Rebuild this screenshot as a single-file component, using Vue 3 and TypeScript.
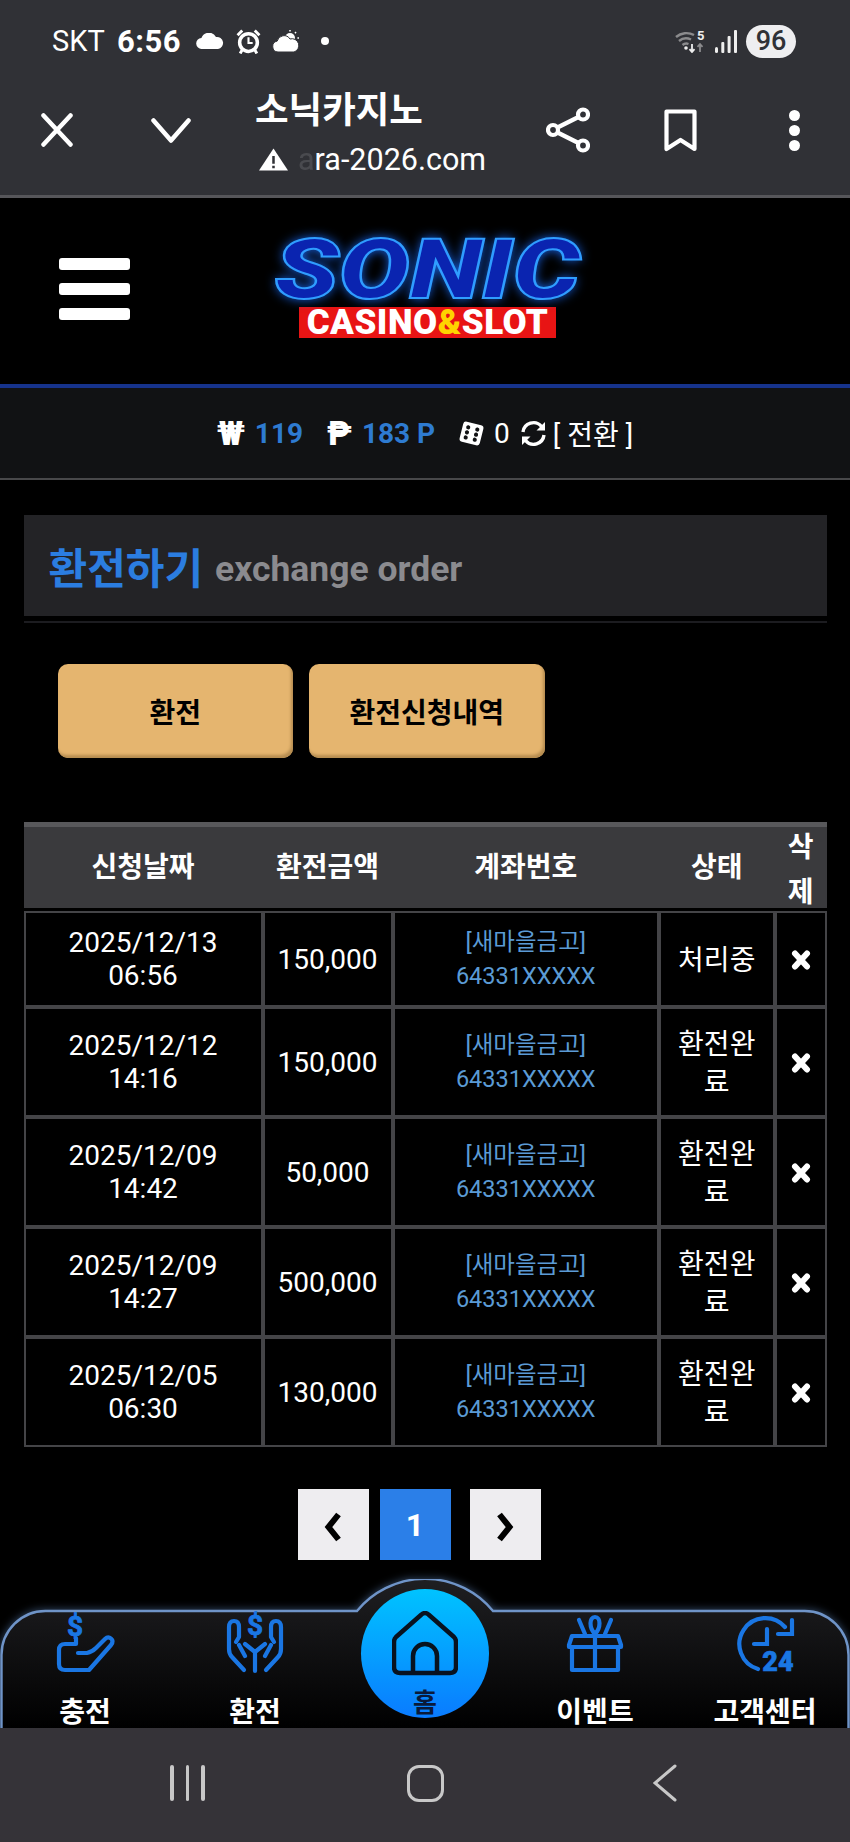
<script setup lang="ts">
interface ExchangeRow {
  date: string
  time: string
  amount: string
  status: string
}

const bank = '[새마을금고]'
const account = '64331XXXXX'

const rows: ExchangeRow[] = [
  { date: '2025/12/13', time: '06:56', amount: '150,000', status: '처리중' },
  { date: '2025/12/12', time: '14:16', amount: '150,000', status: '환전완료' },
  { date: '2025/12/09', time: '14:42', amount: '50,000', status: '환전완료' },
  { date: '2025/12/09', time: '14:27', amount: '500,000', status: '환전완료' },
  { date: '2025/12/05', time: '06:30', amount: '130,000', status: '환전완료' },
]
</script>

<template>
  <div class="phone">
    <div class="chrome">
      <div class="status-bar">
        <span class="carrier">SKT</span>
        <span class="clock">6:56</span>
        <svg class="st-cloud" viewBox="0 0 28 16"><path d="M6 16a5.500 5.500 0 0 1-.6-11A8 8 0 0 1 20 4a6 6 0 0 1 2 12z" fill="#fff" /></svg>
        <svg class="st-alarm" viewBox="0 0 24 24" fill="none" stroke="#fff">
          <circle cx="12" cy="13" r="8.500" stroke-width="3.400" />
          <path d="M12 8v5.500h4" stroke-width="2" />
          <path d="M1.500 6 6 1.500M22.500 6 18 1.500M6 20l-2 3.500M18 20l2 3.500" stroke-width="2.800" />
        </svg>
        <svg class="st-sun" viewBox="0 0 28 22">
          <circle cx="18" cy="8" r="5" fill="#fff" />
          <path d="M18 0v1.500M24 2l-1 1.200M27 8h-1.600" stroke="#fff" stroke-width="1.500" />
          <path d="M6 22a5.500 5.500 0 0 1-.8-10.900A7 7 0 0 1 18 9a6.500 6.500 0 0 1 4 13z" fill="#fff" stroke="#303136" stroke-width="1" />
        </svg>
        <span class="st-dot"></span>
        <span class="st-spacer"></span>
        <svg class="st-wifi" viewBox="0 0 30 24" fill="none">
          <path d="M1 8a16 16 0 0 1 18-2M4 12a11 11 0 0 1 12-1.500M7.500 16a6 6 0 0 1 6-1" stroke="#8b8b8d" stroke-width="2.400" />
          <circle cx="11" cy="19" r="1.800" fill="#eee" />
          <text x="22" y="11" class="st-five">5</text>
          <path d="M17 15v8m-2.500-2.800 2.500 2.800 2.500-2.800" stroke="#eee" stroke-width="1.800" />
          <path d="M25 23v-8m-2.500 2.800 2.500-2.800 2.500 2.800" stroke="#8b8b8d" stroke-width="1.800" />
        </svg>
        <svg class="st-signal" viewBox="0 0 22 23" fill="#eee">
          <rect x="0" y="17" width="3" height="6" rx="1.500" />
          <rect x="6.300" y="12" width="3" height="11" rx="1" />
          <rect x="12.600" y="6" width="3" height="17" rx="1" />
          <rect x="19" y="0" width="3" height="23" rx="1" />
        </svg>
        <span class="battery">96</span>
      </div>
      <div class="toolbar">
        <svg class="tb-close" viewBox="0 0 32 34" fill="none" stroke="#fff" stroke-width="4.500" stroke-linecap="round"><path d="M2.500 2.500 29.500 31.500M29.500 2.500 2.500 31.500" /></svg>
        <svg class="tb-chevron" viewBox="0 0 40 25" fill="none" stroke="#fff" stroke-width="4.500" stroke-linecap="round" stroke-linejoin="round"><path d="M2.500 2.500 20 22.500 37.500 2.500" /></svg>
        <div class="tb-title">
          <div class="tb-name">소닉카지노</div>
          <div class="tb-url">
            <svg class="tb-warn" viewBox="0 0 30 23"><path d="M15 0 30 23H0z" fill="#fff" /><path d="M15 8v8M15 18v2.500" stroke="#303136" stroke-width="2.600" /></svg>
            <span class="tb-url-text"><span class="tb-fade">a</span>ra-2026.com</span>
          </div>
        </div>
        <svg class="tb-share" viewBox="0 0 44 46" fill="none" stroke="#fff" stroke-width="4.200">
          <circle cx="37" cy="7.500" r="5" />
          <circle cx="7" cy="23" r="5" />
          <circle cx="37" cy="38.500" r="5" />
          <path d="M32.500 10 11.500 20.500M11.500 25.500 32.500 36" />
        </svg>
        <svg class="tb-mark" viewBox="0 0 33 43" fill="none" stroke="#fff" stroke-width="4.200" stroke-linejoin="round"><path d="M2.500 2.500h28v37.500L16.500 31 2.500 40z" /></svg>
        <div class="tb-dots"><span></span><span></span><span></span></div>
      </div>
    </div>

    <header class="site-header">
      <div class="burger"><span></span><span></span><span></span></div>
      <div class="logo">
        <div class="logo-sonic">SONIC</div>
        <div class="logo-sub">CASINO<em>&amp;</em>SLOT</div>
      </div>
    </header>

    <div class="balance">
      <span class="cur">₩</span>
      <span class="amt amt-first">119</span>
      <span class="cur cur-point">₱</span>
      <span class="amt amt-point">183 P</span>
      <svg class="dice" viewBox="0 0 26 26">
        <rect x="3" y="3" width="20" height="20" rx="3" fill="#fff" transform="rotate(14 13 13)" />
        <g fill="#111214" transform="rotate(14 13 13)">
          <circle cx="8.500" cy="8" r="2" /><circle cx="8.500" cy="13" r="2" /><circle cx="8.500" cy="18" r="2" />
          <circle cx="17.500" cy="8" r="2" /><circle cx="17.500" cy="13" r="2" /><circle cx="17.500" cy="18" r="2" />
        </g>
      </svg>
      <span class="zero">0</span>
      <svg class="refresh" viewBox="0 0 27 27" fill="none" stroke="#fff" stroke-width="3.400">
        <path d="M3 12A10.500 10.500 0 0 1 21.500 6.500" />
        <path d="M24 15A10.500 10.500 0 0 1 5.500 20.500" />
        <path d="M25 2v8.500h-8.500z" fill="#fff" stroke="none" />
        <path d="M2 25v-8.500h8.500z" fill="#fff" stroke="none" />
      </svg>
      <span class="switch">[ 전환 ]</span>
    </div>

    <main class="content">
      <div class="title-box">
        <h1>환전하기</h1>
        <span class="title-sub">exchange order</span>
      </div>
      <div class="title-rule"></div>

      <div class="tabs">
        <button type="button" class="tab">환전</button>
        <button type="button" class="tab">환전신청내역</button>
      </div>

      <table class="orders">
        <colgroup>
          <col style="width: 239px" />
          <col style="width: 130px" />
          <col style="width: 266.5px" />
          <col style="width: 115.5px" />
          <col style="width: 52.5px" />
        </colgroup>
        <thead>
          <tr>
            <th>신청날짜</th>
            <th>환전금액</th>
            <th>계좌번호</th>
            <th>상태</th>
            <th class="th-del"><span>삭제</span></th>
          </tr>
        </thead>
        <tbody>
          <tr v-for="row in rows" :key="row.date + row.time">
            <td>{{ row.date }}<br />{{ row.time }}</td>
            <td>{{ row.amount }}</td>
            <td class="td-account">{{ bank }}<br />{{ account }}</td>
            <td class="td-status">{{ row.status }}</td>
            <td class="td-del">
              <svg viewBox="0 0 20 20" fill="none" stroke="#fff" stroke-width="6" stroke-linecap="round"><path d="M4 3.500 16 16.500M16 3.500 4 16.500" /></svg>
            </td>
          </tr>
        </tbody>
      </table>

      <div class="pager">
        <a class="page-btn">
          <svg viewBox="0 0 20 30" fill="none" stroke="#000" stroke-width="6" stroke-linejoin="miter"><path d="M15.500 2.500 5.500 15l10 12.500" /></svg>
        </a>
        <a class="page-btn page-on">1</a>
        <a class="page-btn page-next">
          <svg viewBox="0 0 20 30" fill="none" stroke="#000" stroke-width="6" stroke-linejoin="miter"><path d="m4.500 2.500 10 12.500-10 12.500" /></svg>
        </a>
      </div>
    </main>

    <nav class="bottom-nav">
      <svg class="nav-shape" viewBox="0 0 850 149">
        <defs>
          <linearGradient id="navFill" x1="0" y1="0" x2="0" y2="1">
            <stop offset="0" stop-color="#1f1f22" />
            <stop offset="1" stop-color="#000" />
          </linearGradient>
        </defs>
        <path d="M1.500 150V76A44 44 0 0 1 45.500 32H357A88 88 0 0 1 493 32H804.500A44 44 0 0 1 848.500 76V150" fill="url(#navFill)" stroke="#6f94c8" stroke-width="2.400" />
      </svg>

      <a class="nav-item">
        <svg viewBox="0 0 56 57" fill="none" stroke="#1a76e3" stroke-width="4.200" stroke-linecap="round" stroke-linejoin="round">
          <text x="18" y="21" class="ico-dollar" text-anchor="middle">$</text>
          <path d="M19 23v6H8q-6 0-6 6v14q0 6 6 6h24l22-25q3-4 0-6.500t-6 0.500l-9 9q-4 4-9 5h-9" />
        </svg>
        <span>충전</span>
      </a>
      <a class="nav-item">
        <svg viewBox="0 0 56 57" fill="none" stroke="#1a76e3" stroke-width="4.200" stroke-linecap="round" stroke-linejoin="round">
          <text x="28" y="20" class="ico-dollar" text-anchor="middle">$</text>
          <path d="M17 55 5 42q-3-3-3-8V12q0-6 5-6t5 6v10l-3 5" />
          <path d="M39 55l12-13q3-3 3-8V12q0-6-5-6t-5 6v10l3 5" />
          <path d="M28 56V37l-10-8M28 37l10-8M12 30l6 11M44 30l-6 11" />
        </svg>
        <span>환전</span>
      </a>
      <div class="nav-home">
        <svg viewBox="0 0 66 65" fill="none" stroke="#08121f" stroke-width="4.500" stroke-linejoin="round">
          <path d="M29.500 3.500a5 5 0 0 1 7 0L62 26q2 2 2 5v25q0 6-6 6H8q-6 0-6-6V31q0-3 2-5z" />
          <path d="M21 61V45a12 12 0 0 1 24 0v16" />
        </svg>
        <span>홈</span>
      </div>
      <a class="nav-item">
        <svg viewBox="0 0 56 57" fill="none" stroke="#1a76e3" stroke-width="4.200" stroke-linecap="round" stroke-linejoin="round">
          <path d="M5 21h46l3 9v2H2v-2zM5 32v23h46V32M28 21v34" />
          <path d="M28 19c-6-6-6-17 0-17s6 11 0 17zM12 5l6 14M44 5l-6 14" />
        </svg>
        <span>이벤트</span>
      </a>
      <a class="nav-item">
        <svg viewBox="0 0 56 57" fill="none" stroke="#1a76e3" stroke-width="4.200" stroke-linecap="round">
          <path d="M21 54A26 26 0 1 1 48 12" />
          <path d="M41 19h14V5M30 14v15H17" />
          <text x="41" y="56" class="ico-24" text-anchor="middle">24</text>
        </svg>
        <span>고객센터</span>
      </a>
    </nav>

    <div class="system-nav">
      <div class="sys-recent"><span></span><span></span><span></span></div>
      <span class="sys-home"></span>
      <svg class="sys-back" viewBox="0 0 24 38" fill="none" stroke="#c8c8c8" stroke-width="3" stroke-linecap="round"><path d="M22 2 2 19l20 17" /></svg>
    </div>
  </div>
</template>

<style>
html,
body {
  background: #000;
}
</style>

<style scoped>
.phone {
  display: flex;
  flex-direction: column;
  width: 850px;
  height: 1842px;
  overflow: hidden;
  background: #000;
  color: #fff;
  font-family: Roboto, "Noto Sans CJK KR", sans-serif;
}

.chrome {
  height: 195px;
  background: #303136;
  border-bottom: 3px solid #56565a;
  flex-shrink: 0;
}

.status-bar {
  display: flex;
  align-items: center;
  height: 82px;
  padding: 0 54px 0 52px;
}

.carrier {
  font-size: 29px;
  width: 65px;
}

.clock {
  font-size: 31px;
  font-weight: 700;
  letter-spacing: 0.5px;
  width: 79px;
}

.st-cloud {
  width: 28px;
  height: 16px;
}

.st-alarm {
  width: 25px;
  height: 25px;
  margin-left: 12px;
}

.st-sun {
  width: 28px;
  height: 22px;
  margin-left: 11px;
}

.st-dot {
  width: 8px;
  height: 8px;
  border-radius: 50%;
  background: #fff;
  margin-left: 21px;
}

.st-spacer {
  flex: 1;
}

.st-wifi {
  width: 30px;
  height: 24px;
}

.st-five {
  font-size: 13px;
  font-weight: 700;
  fill: #eee;
  stroke: none;
}

.st-signal {
  width: 22px;
  height: 23px;
  margin-left: 10px;
}

.battery {
  width: 50px;
  height: 33px;
  margin-left: 9px;
  border-radius: 17px;
  background: #eeeef0;
  color: #303136;
  font-size: 27px;
  font-weight: 500;
  line-height: 33px;
  text-align: center;
}

.toolbar {
  display: flex;
  align-items: center;
  height: 96px;
  padding-left: 41px;
}

.tb-close {
  width: 32px;
  height: 34px;
}

.tb-chevron {
  width: 40px;
  height: 25px;
  margin-left: 78px;
}

.tb-title {
  width: 290px;
  margin-left: 64px;
  margin-top: 4px;
}

.tb-name {
  font-size: 36.5px;
  font-weight: 700;
  line-height: 48px;
}

.tb-url {
  display: flex;
  align-items: center;
  margin-top: 7px;
  margin-left: 4px;
}

.tb-warn {
  width: 29px;
  height: 23px;
}

.tb-url-text {
  font-size: 30.5px;
  line-height: 36px;
  margin-left: 10px;
}

.tb-fade {
  opacity: 0.12;
}

.tb-share {
  width: 44px;
  height: 46px;
  margin-left: 1px;
}

.tb-mark {
  width: 33px;
  height: 43px;
  margin-left: 74px;
}

.tb-dots {
  display: flex;
  flex-direction: column;
  gap: 4px;
  margin-left: 92px;
}

.tb-dots span {
  width: 11px;
  height: 11px;
  border-radius: 50%;
  background: #fff;
}

.site-header {
  display: flex;
  align-items: flex-start;
  flex-shrink: 0;
  height: 186px;
  background: #000;
  border-bottom: 4px solid #16338c;
}

.burger {
  display: flex;
  flex-direction: column;
  gap: 13px;
  width: 71px;
  margin: 60px 0 0 59px;
}

.burger span {
  height: 12px;
  border-radius: 3px;
  background: #fff;
}

.logo {
  display: flex;
  flex-direction: column;
  align-items: center;
  width: 303px;
  margin: 39px 0 0 146px;
}

.logo-sonic {
  height: 65px;
  margin-bottom: 5px;
  color: #0a24b0;
  font-size: 84px;
  font-style: italic;
  font-weight: 900;
  line-height: 65px;
  white-space: nowrap;
  -webkit-text-stroke: 2px #2f9dff;
  text-shadow: 0 0 10px #1a6cff;
  transform: scaleX(1.26);
}

.logo-sub {
  width: 257px;
  height: 31px;
  background: #e81414;
  font-size: 35px;
  font-weight: 900;
  letter-spacing: 0.5px;
  line-height: 32px;
  text-align: center;
  white-space: nowrap;
}

.logo-sub em {
  color: #ffd400;
  font-style: normal;
}

.balance {
  display: flex;
  align-items: center;
  justify-content: center;
  flex-shrink: 0;
  height: 90px;
  background: #111214;
  border-bottom: 2px solid #48484a;
  font-size: 28px;
}

.cur {
  font-size: 33px;
  font-weight: 900;
}

.cur-point {
  margin-left: 24px;
}

.amt {
  color: #2e7bd1;
  font-weight: 700;
  margin-left: 10px;
}

.dice {
  width: 27px;
  height: 27px;
  margin-left: 23px;
}

.zero {
  margin-left: 9px;
  font-size: 28px;
}

.refresh {
  width: 27px;
  height: 27px;
  margin-left: 10px;
}

.switch {
  margin-left: 6px;
  font-size: 28px;
}

.content {
  flex: 1;
  min-height: 0;
  padding: 35px 23.5px 0;
}

.title-box {
  display: flex;
  align-items: center;
  gap: 12px;
  height: 101px;
  padding-left: 25px;
  background: #232326;
}

.title-box h1 {
  margin: 0;
  color: #2b7de0;
  font-size: 42px;
  font-weight: 700;
}

.title-sub {
  color: #8b8b8f;
  font-size: 35.5px;
  font-weight: 700;
  margin-top: 7px;
}

.title-rule {
  height: 2px;
  margin-top: 5px;
  background: #1c1c20;
}

.tabs {
  display: flex;
  gap: 16px;
  margin: 41px 0 0 34px;
}

.tab {
  width: 235.5px;
  height: 94px;
  border: none;
  border-radius: 10px;
  background: #e5b56f;
  box-shadow: inset -2px -3px 3px #b58c50;
  color: #000;
  font-family: inherit;
  font-size: 28px;
  font-weight: 700;
}

.orders {
  width: 803px;
  margin-top: 64px;
  border-collapse: separate;
  border-spacing: 0;
  table-layout: fixed;
  font-size: 28px;
}

.orders th {
  height: 81px;
  padding: 0 10px;
  background: #3a3a3d;
  border-top: 5px solid #58585b;
  border-bottom: 3px solid #000;
  font-weight: 700;
  line-height: 44px;
}

.th-del span {
  display: block;
  height: 81px;
  margin-top: -4px;
  line-height: 45px;
}

.orders td {
  padding: 13px 10px;
  border: 2px solid #444447;
  line-height: 33px;
  text-align: center;
}

.orders td.td-account {
  padding: 12px 10px;
  color: #5b9bd5;
  font-size: 23.5px;
  line-height: 34px;
}

.orders td.td-status {
  padding: 17px 10px 13px;
  line-height: 38px;
}

.orders td.td-del {
  padding: 0;
}

.td-del svg {
  display: block;
  width: 20px;
  height: 20px;
  margin: 2px auto 0;
}

.pager {
  display: flex;
  margin: 42px 0 0 274px;
}

.page-btn {
  display: flex;
  align-items: center;
  justify-content: center;
  width: 71px;
  height: 71px;
  background: #eeedf0;
}

.page-btn svg {
  width: 20px;
  height: 30px;
  margin-top: 5px;
}

.page-on {
  margin-left: 11px;
  background: #2b7fe8;
  color: #fff;
  font-size: 32px;
  font-weight: 700;
}

.page-next {
  margin-left: 19px;
}

.bottom-nav {
  position: relative;
  display: grid;
  flex-shrink: 0;
  grid-template-columns: repeat(5, 170px);
  height: 149px;
}

.nav-shape {
  position: absolute;
  inset: 0;
  width: 850px;
  height: 149px;
  filter: drop-shadow(0 0 4px rgba(120, 170, 240, 0.45));
}

.nav-item {
  position: relative;
  display: flex;
  flex-direction: column;
  align-items: center;
  padding-top: 36px;
}

.nav-item svg {
  width: 56px;
  height: 57px;
  overflow: visible;
}

.nav-item span {
  margin-top: 24px;
  font-size: 28px;
  font-weight: 700;
  line-height: 34px;
  white-space: nowrap;
}

.ico-dollar {
  fill: #1a76e3;
  stroke: #1a76e3;
  stroke-width: 0.8px;
  font-family: Roboto, sans-serif;
  font-size: 28px;
  font-weight: 700;
}

.ico-24 {
  fill: #1a76e3;
  stroke: #1a76e3;
  stroke-width: 0.6px;
  font-family: Roboto, sans-serif;
  font-size: 27px;
  font-weight: 900;
}

.nav-home {
  position: relative;
  display: flex;
  flex-direction: column;
  align-items: center;
  justify-self: center;
  width: 128px;
  height: 129px;
  margin-top: 10px;
  padding-top: 22px;
  box-sizing: border-box;
  border-radius: 50%;
  background: linear-gradient(180deg, #00c3ff 0%, #0a7bff 100%);
}

.nav-home svg {
  width: 66px;
  height: 65px;
  flex-shrink: 0;
}

.nav-home span {
  margin-top: 13px;
  color: #0a1a3a;
  font-size: 26px;
  font-weight: 700;
  line-height: 28px;
}

.system-nav {
  position: relative;
  display: flex;
  flex-shrink: 0;
  align-items: center;
  height: 114px;
  padding-left: 170px;
  padding-bottom: 4px;
  box-sizing: border-box;
  background: #353338;
}

.sys-recent {
  display: flex;
  gap: 12px;
}

.sys-recent span {
  width: 3.500px;
  height: 36px;
  border-radius: 2px;
  background: #c8c8c8;
}

.sys-home {
  width: 37px;
  height: 37px;
  margin-left: 202px;
  box-sizing: border-box;
  border: 3.500px solid #c8c8c8;
  border-radius: 12px;
}

.sys-back {
  width: 24px;
  height: 38px;
  margin-left: 209px;
}
</style>
